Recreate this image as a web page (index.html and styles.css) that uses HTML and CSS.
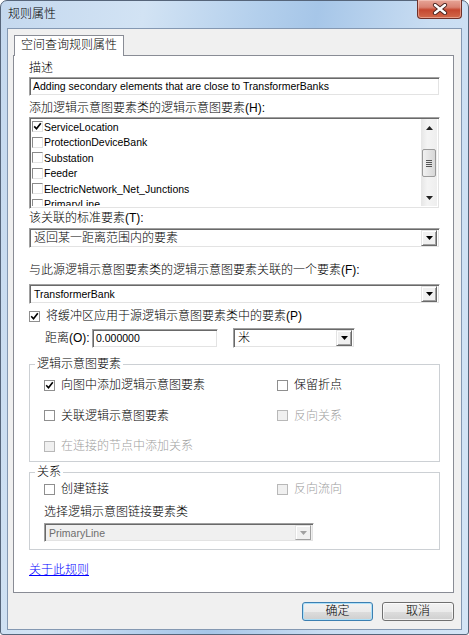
FILE: index.html
```html
<!DOCTYPE html>
<html lang="zh-CN">
<head>
    <meta charset="UTF-8">
    <title>规则属性</title>
    <link rel="stylesheet" href="styles.css">
</head>
<body>
    <div class="window">
        <div class="titlebar">
            <span class="title">规则属性</span>
            <div class="close">
                <svg width="16" height="12" viewBox="0 0 16 12">
                    <path d="M3 2 L13 10 M13 2 L3 10" stroke="#4a2420" stroke-width="4.2" stroke-linecap="round"/>
                    <path d="M3 2 L13 10 M13 2 L3 10" stroke="#fff" stroke-width="2.4" stroke-linecap="round"/>
                </svg>
            </div>
        </div>
        <div class="client">
            <div class="tabs">
                <div class="tab">空间查询规则属性</div>
            </div>
            <div class="tabpage">
                <div class="label">描述</div>
                <div class="textbox sunken desc">Adding secondary elements that are close to TransformerBanks</div>

                <div class="label gap-5">添加逻辑示意图要素类的逻辑示意图要素(H):</div>
                <div class="listbox sunken">
                    <div class="items">
                        <div class="item"><span class="chk3d"><svg width="9" height="9" viewBox="0 0 9 9"><path d="M1.2 4.3 L3.5 6.8 L7.8 1.2" fill="none" stroke="#000" stroke-width="1.7"/></svg></span>ServiceLocation</div>
                        <div class="item"><span class="chk3d"></span>ProtectionDeviceBank</div>
                        <div class="item"><span class="chk3d"></span>Substation</div>
                        <div class="item"><span class="chk3d"></span>Feeder</div>
                        <div class="item"><span class="chk3d"></span>ElectricNetwork_Net_Junctions</div>
                        <div class="item"><span class="chk3d"></span>PrimaryLine</div>
                    </div>
                    <div class="vscroll">
                        <div class="sb-btn"><svg width="7" height="4" viewBox="0 0 7 4"><path d="M0 4h7L3.5 0z" fill="#222"/></svg></div>
                        <div class="sb-track">
                            <div class="sb-thumb">
                                <svg width="6" height="7" viewBox="0 0 6 7"><path d="M0 .5h6M0 2.5h6M0 4.5h6M0 6.5h6" stroke="#555" stroke-width="1"/></svg>
                            </div>
                        </div>
                        <div class="sb-btn"><svg width="7" height="4" viewBox="0 0 7 4"><path d="M0 0h7L3.5 4z" fill="#222"/></svg></div>
                    </div>
                </div>

                <div class="label gap-2">该关联的标准要素(T):</div>
                <div class="combo sunken gap-3">
                    <span class="combo-text">返回某一距离范围内的要素</span>
                    <span class="combo-btn"><svg width="7" height="4" viewBox="0 0 7 4"><path d="M0 0h7L3.5 4z" fill="#000"/></svg></span>
                </div>

                <div class="label gap-15">与此源逻辑示意图要素类的逻辑示意图要素关联的一个要素(F):</div>
                <div class="combo sunken gap-7">
                    <span class="combo-text latin">TransformerBank</span>
                    <span class="combo-btn"><svg width="7" height="4" viewBox="0 0 7 4"><path d="M0 0h7L3.5 4z" fill="#000"/></svg></span>
                </div>

                <div class="check-row gap-5">
                    <span class="chk"><svg width="9" height="9" viewBox="0 0 9 9"><path d="M1.2 4.3 L3.5 6.8 L7.8 1.2" fill="none" stroke="#000" stroke-width="1.6"/></svg></span>
                    <span>将缓冲区应用于源逻辑示意图要素类中的要素(P)</span>
                </div>
                <div class="distance-row gap-5">
                    <span class="dist-label">距离(O):</span>
                    <div class="textbox sunken dist-input latin">0.000000</div>
                    <div class="combo sunken unit">
                        <span class="combo-text">米</span>
                        <span class="combo-btn"><svg width="7" height="4" viewBox="0 0 7 4"><path d="M0 0h7L3.5 4z" fill="#000"/></svg></span>
                    </div>
                </div>

                <div class="group group-elements">
                    <div class="group-title">逻辑示意图要素</div>
                    <div class="opts">
                        <div class="check-row"><span class="chk"><svg width="9" height="9" viewBox="0 0 9 9"><path d="M1.2 4.3 L3.5 6.8 L7.8 1.2" fill="none" stroke="#000" stroke-width="1.6"/></svg></span><span>向图中添加逻辑示意图要素</span></div>
                        <div class="check-row"><span class="chk"></span><span>保留折点</span></div>
                        <div class="check-row"><span class="chk"></span><span>关联逻辑示意图要素</span></div>
                        <div class="check-row disabled"><span class="chk"></span><span>反向关系</span></div>
                        <div class="check-row disabled"><span class="chk"></span><span>在连接的节点中添加关系</span></div>
                    </div>
                </div>

                <div class="group group-relations">
                    <div class="group-title">关系</div>
                    <div class="opts opts-single">
                        <div class="check-row"><span class="chk"></span><span>创建链接</span></div>
                        <div class="check-row disabled"><span class="chk"></span><span>反向流向</span></div>
                    </div>
                    <div class="label gap-9">选择逻辑示意图链接要素类</div>
                    <div class="combo sunken combo-disabled gap-4">
                        <span class="combo-text latin">PrimaryLine</span>
                        <span class="combo-btn"><svg width="7" height="4" viewBox="0 0 7 4"><path d="M0 0h7L3.5 4z" fill="#a0a0a0"/></svg></span>
                    </div>
                </div>

                <a class="about">关于此规则</a>
            </div>

            <div class="buttons">
                <div class="btn btn-default">确定</div>
                <div class="btn">取消</div>
            </div>
        </div>
    </div>
</body>
</html>
```

FILE: styles.css
```css
body {
    margin: 0;
    font-family: "Liberation Sans", "Noto Sans CJK SC", sans-serif;
    font-size: 12px;
    font-weight: 300;
    color: #000;
}

.window {
    width: 469px;
    height: 635px;
    box-sizing: border-box;
    border: 1px solid #56657a;
    border-radius: 7px 7px 3px 3px;
    padding: 0 6px 4px 6px;
    display: flex;
    flex-direction: column;
    background: linear-gradient(100deg, #c4d8ee 0%, #d2e3f4 25%, #b3cfec 45%, #a6c6e8 55%, #c9ddf2 75%, #d4e5f6 100%);
}

.titlebar {
    height: 27px;
    display: flex;
    justify-content: space-between;
    align-items: flex-start;
}

.title {
    margin: 6px 0 0 1px;
    line-height: 14px;
}

.close {
    width: 45px;
    height: 19px;
    box-sizing: border-box;
    margin-top: -1px;
    border: 1px solid #6e3029;
    border-top: none;
    border-radius: 0 0 4px 4px;
    background: linear-gradient(#e7a597 0%, #d98272 40%, #c5472f 55%, #d26a4c 100%);
    box-shadow: inset 0 0 0 1px rgba(255, 220, 210, 0.45);
    display: flex;
    align-items: center;
    justify-content: center;
}

.client {
    flex: 1;
    border: 1px solid #8498b2;
    background: #f0f0f0;
    padding: 6px 7px 0 5px;
    display: flex;
    flex-direction: column;
}

.tabs {
    display: flex;
    padding-left: 1px;
}

.tab {
    width: 110px;
    height: 21px;
    box-sizing: border-box;
    border: 1px solid #898c95;
    border-bottom: none;
    background: #fff;
    text-align: center;
    line-height: 19px;
    position: relative;
    z-index: 1;
    margin-bottom: -1px;
}

.tabpage {
    background: #fff;
    border: 1px solid #898c95;
    padding: 5px 13px 15px 15px;
    display: flex;
    flex-direction: column;
}

.label {
    line-height: 14px;
}

.gap-2 { margin-top: 2px; }
.gap-3 { margin-top: 3px; }
.gap-4 { margin-top: 4px; }
.gap-5 { margin-top: 5px; }
.gap-7 { margin-top: 7px; }
.gap-9 { margin-top: 9px; }
.gap-15 { margin-top: 15px; }

.latin {
    font-size: 10.5px;
}

.sunken {
    box-sizing: border-box;
    border: 1px solid;
    border-color: #a0a0a0 #ffffff #ffffff #a0a0a0;
    box-shadow: inset 1px 1px 0 #696969, inset -1px -1px 0 #e3e3e3;
    background: #fff;
}

.textbox {
    height: 19px;
    padding: 0 3px;
    line-height: 17px;
    white-space: nowrap;
    overflow: hidden;
}

.desc {
    margin-top: 2px;
    font-size: 10.5px;
}

.listbox {
    margin-top: 2px;
    height: 92px;
    display: flex;
    padding: 1px 2px 2px 2px;
    font-size: 10.5px;
}

.items {
    flex: 1;
    overflow: hidden;
}

.item {
    height: 15.5px;
    display: flex;
    align-items: center;
    white-space: nowrap;
}

.chk3d {
    width: 11px;
    height: 11px;
    box-sizing: border-box;
    border: 1px solid;
    border-color: #8a8a8a #e3e3e3 #e3e3e3 #8a8a8a;
    background: #fff;
    margin-right: 1px;
    display: flex;
    align-items: center;
    justify-content: center;
    flex: none;
}

.vscroll {
    width: 16px;
    display: flex;
    flex-direction: column;
    background: linear-gradient(90deg, #e6e6e6, #f4f4f4 40%, #eeeeee);
}

.sb-btn {
    height: 17px;
    display: flex;
    align-items: center;
    justify-content: center;
}

.sb-track {
    flex: 1;
}

.sb-thumb {
    margin: 13px 1px 0 1px;
    height: 28px;
    box-sizing: border-box;
    border: 1px solid #9a9a9a;
    border-radius: 2px;
    background: linear-gradient(90deg, #f1f1f1, #e4e4e4 50%, #d7d7d7);
    display: flex;
    align-items: center;
    justify-content: center;
}

.combo {
    height: 20px;
    display: flex;
    align-items: center;
    padding: 2px;
}

.combo-text {
    flex: 1;
    padding-left: 2px;
    line-height: 16px;
    white-space: nowrap;
}

.combo-btn {
    width: 16px;
    height: 16px;
    box-sizing: border-box;
    border: 1px solid;
    border-color: #e3e3e3 #696969 #696969 #e3e3e3;
    box-shadow: inset 1px 1px 0 #fff, inset -1px -1px 0 #a0a0a0;
    background: #f0f0f0;
    display: flex;
    align-items: center;
    justify-content: center;
}

.check-row {
    height: 14px;
    line-height: 14px;
    display: flex;
    align-items: center;
    white-space: nowrap;
}

.chk {
    width: 11px;
    height: 11px;
    box-sizing: border-box;
    border: 1px solid #8f8f8f;
    background: #fff;
    margin-right: 6px;
    display: flex;
    align-items: center;
    justify-content: center;
    flex: none;
}

.check-row.disabled {
    color: #a0a0a0;
}

.check-row.disabled .chk {
    border-color: #b8b8b8;
    background: #f0f0f0;
}

.distance-row {
    display: flex;
    align-items: center;
    padding-left: 16px;
}

.dist-label {
    width: 47px;
    line-height: 14px;
}

.dist-input {
    width: 126px;
}

.unit {
    width: 122px;
    height: 20px;
    margin-left: 15px;
}

.group {
    border: 1px solid #ccd0d4;
    padding: 0 14px;
}

.group-title {
    width: fit-content;
    margin: -8px 0 0 -9px;
    padding: 0 2px;
    background: #fff;
    line-height: 14px;
}

.group-elements {
    margin-top: 16px;
    padding-bottom: 8px;
}

.group-relations {
    margin-top: 10px;
    padding-bottom: 7px;
}

.opts {
    display: grid;
    grid-template-columns: 233px 1fr;
    row-gap: 16.5px;
    margin-top: 7px;
}

.opts-single {
    margin-top: 3px;
}

.combo-disabled {
    width: 270px;
    height: 19px;
    background: #f0f0f0;
    color: #6d6d6d;
}

.combo-disabled .combo-btn {
    height: 15px;
    border-color: #e3e3e3 #a0a0a0 #a0a0a0 #e3e3e3;
    box-shadow: inset 1px 1px 0 #fff;
}

.about {
    margin-top: 13px;
    line-height: 14px;
    color: #0000ff;
    text-decoration: underline;
    cursor: pointer;
    width: fit-content;
}

.buttons {
    display: flex;
    justify-content: flex-end;
    gap: 9px;
    margin-top: 9px;
}

.btn {
    width: 72px;
    height: 19px;
    box-sizing: border-box;
    border: 1px solid #707070;
    border-radius: 3px;
    background: linear-gradient(#f2f2f2 0%, #ebebeb 50%, #dddddd 51%, #cfcfcf 100%);
    box-shadow: inset 0 0 0 1px rgba(255, 255, 255, 0.7);
    text-align: center;
    line-height: 17px;
}

.btn-default {
    width: 71px;
    border-color: #3c7fb1;
    box-shadow: inset 0 0 0 1px #aee0f8;
}
```
